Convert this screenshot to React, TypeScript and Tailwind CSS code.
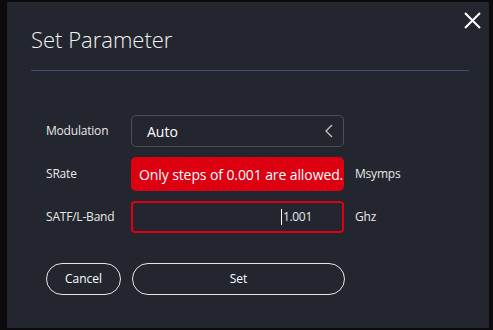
import React from "react";

export default function App() {
  return (
    <div
      className="w-[493px] h-[330px] bg-[#0b0b0d] overflow-hidden"
      style={{ fontFamily: '"Open Sans", "Noto Sans", sans-serif' }}
    >
      <div className="relative ml-[7px] mt-[2px] w-[482px] h-[326px] bg-[#23262e] text-white">
        <button className="absolute right-[7px] top-[8px] w-[20px] h-[20px] flex items-center justify-center">
          <svg width="19" height="19" viewBox="0 0 19 19" fill="none" stroke="#ffffff" strokeWidth="2">
            <path d="M2 2 L17 17 M17 2 L2 17" />
          </svg>
        </button>
        <div className="pl-[24px] pr-[12px] pt-[22px]">
          <div className="text-[22px] leading-[30px] font-light text-[#f2f2f2]">Set Parameter</div>
          <div className="mt-[16px] mr-[8px] h-[1px] bg-[#484c6c]" />
        </div>
        <div className="pl-[39px] pt-[44px]">
          <div className="grid grid-cols-[85px_213px_auto] items-center gap-y-[10px]">
            <div className="text-[12px] font-medium tracking-[-0.2px] text-[#e8e8e8]">Modulation</div>
            <div className="h-[32px] rounded-[5px] border border-[#4b4e56] flex items-center justify-between pl-[15px] pr-[10px]">
              <span className="text-[14px] text-white">Auto</span>
              <svg width="8" height="14" viewBox="0 0 8 14" fill="none" stroke="#c8c8c8" strokeWidth="1.3">
                <path d="M7 1 L1 7 L7 13" />
              </svg>
            </div>
            <div />
            <div className="text-[12px] font-medium tracking-[-0.2px] text-[#e8e8e8]">SRate</div>
            <div className="h-[34px] rounded-[5px] bg-[#dc0011] flex items-center pl-[8px]">
              <span className="text-[14px] tracking-[-0.1px] text-white whitespace-nowrap">Only steps of 0.001 are allowed.</span>
            </div>
            <div className="pl-[11px] text-[12px] font-medium tracking-[-0.2px] text-[#e8e8e8]">Msymps</div>
            <div className="text-[12px] font-medium tracking-[-0.2px] text-[#e8e8e8]">SATF/L-Band</div>
            <div className="h-[32px] rounded-[4px] border-2 border-[#dc0011] flex items-center justify-end pr-[30px]">
              <span className="w-[1px] h-[16px] bg-white mr-[1px]" />
              <span className="text-[12px] tracking-[-0.3px] text-[#e8e8e8]">1.001</span>
            </div>
            <div className="pl-[11px] text-[12px] font-medium tracking-[-0.2px] text-[#e8e8e8]">Ghz</div>
          </div>
          <div className="mt-[30px] flex gap-[11px]">
            <button className="w-[75px] h-[32px] rounded-full border border-[#e6e6e6] text-[12px] text-white">Cancel</button>
            <button className="w-[213px] h-[32px] rounded-full border border-[#e6e6e6] text-[12px] text-white">Set</button>
          </div>
        </div>
      </div>
    </div>
  );
}
